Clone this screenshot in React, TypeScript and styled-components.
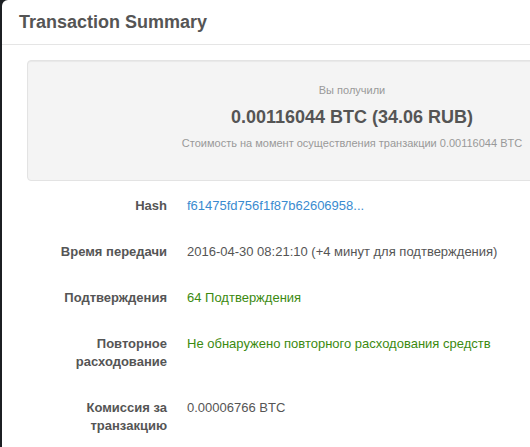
import styled, { createGlobalStyle } from "styled-components";

const GlobalStyle = createGlobalStyle`
  html, body {
    margin: 0;
    padding: 0;
    background: #1c1f23;
    overflow: hidden;
  }
  body {
    font-family: "Liberation Sans", Arial, sans-serif;
    font-size: 13px;
    color: #555;
  }
`;

const Modal = styled.div`
  margin-left: 2px;
  width: 700px;
  min-height: 447px;
  background: #fff;
  border-radius: 6px 6px 0 0;
`;

const Header = styled.div`
  padding: 12px 17px;
  border-bottom: 1px solid #e5e5e5;
`;

const Title = styled.h4`
  margin: 0;
  font-size: 18px;
  line-height: 20px;
  font-weight: bold;
  color: #555;
`;

const Body = styled.div`
  padding: 15px 25px;
`;

const Well = styled.div`
  box-sizing: border-box;
  height: 121px;
  padding: 20px 19px 19px;
  margin-bottom: 16px;
  background: #f4f4f4;
  border: 1px solid #e3e3e3;
  border-radius: 4px;
  box-shadow: inset 0 1px 1px rgba(0, 0, 0, 0.05);
  text-align: center;
`;

const Small = styled.div<{ $top?: number }>`
  font-size: 11px;
  line-height: 18px;
  color: #999;
  margin-top: ${p => p.$top ?? 0}px;
`;

const Amount = styled.div`
  font-size: 18px;
  line-height: 24px;
  font-weight: bold;
  color: #555;
  margin: 6px 0 5px;
`;

const Rows = styled.div`
  display: flex;
  flex-direction: column;
  gap: 28px;
`;

const Row = styled.div`
  display: grid;
  grid-template-columns: 140px 1fr;
  column-gap: 20px;
  line-height: 18px;
`;

const Label = styled.div`
  text-align: right;
  font-weight: bold;
  color: #555;
`;

const Value = styled.div<{ $tone?: "link" | "ok" }>`
  color: ${p => (p.$tone === "link" ? "#3a8bd0" : p.$tone === "ok" ? "#3b8a0f" : "#555")};
`;

const rows: { label: string; value: string; tone?: "link" | "ok" }[] = [
  { label: "Hash", value: "f61475fd756f1f87b62606958...", tone: "link" },
  { label: "Время передачи", value: "2016-04-30 08:21:10 (+4 минут для подтверждения)" },
  { label: "Подтверждения", value: "64 Подтверждения", tone: "ok" },
  { label: "Повторное расходование", value: "Не обнаружено повторного расходования средств", tone: "ok" },
  { label: "Комиссия за транзакцию", value: "0.00006766 BTC" },
];

const App = () => (
  <>
    <GlobalStyle />
    <Modal>
      <Header>
        <Title>Transaction Summary</Title>
      </Header>
      <Body>
        <Well>
          <Small>Вы получили</Small>
          <Amount>0.00116044 BTC (34.06 RUB)</Amount>
          <Small $top={3}>Стоимость на момент осуществления транзакции 0.00116044 BTC</Small>
        </Well>
        <Rows>
          {rows.map(r => (
            <Row key={r.label}>
              <Label>{r.label}</Label>
              <Value $tone={r.tone}>{r.value}</Value>
            </Row>
          ))}
        </Rows>
      </Body>
    </Modal>
  </>
);

export default App;
